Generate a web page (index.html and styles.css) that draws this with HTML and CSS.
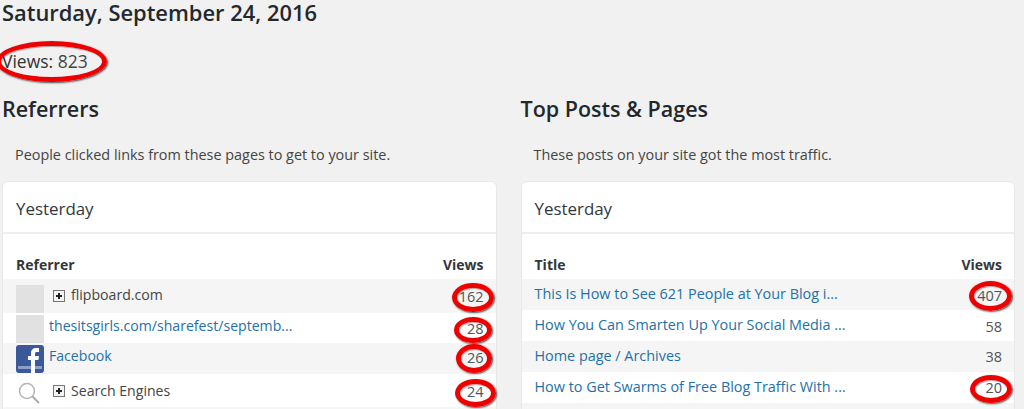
FILE: index.html
```html
<!DOCTYPE html>
<html lang="en">
<head>
    <meta charset="UTF-8">
    <title>Stats</title>
    <link rel="stylesheet" href="styles.css">
</head>
<body>
    <h1>Saturday, September 24, 2016</h1>
    <p class="total"><span class="circled"><b>Views:</b> 823<i class="ring ring-total"></i></span></p>

    <div class="columns">
        <!-- Referrers -->
        <div class="column">
            <h2>Referrers</h2>
            <p class="intro">People clicked links from these pages to get to your site.</p>
            <div class="card">
                <div class="card-title">Yesterday</div>
                <div class="table-head"><span>Referrer</span><span>Views</span></div>
                <div class="row row-a">
                    <span class="thumb"></span>
                    <span class="plus"></span>
                    <span class="name">flipboard.com</span>
                    <span class="num circled">162<i class="ring ring-162"></i></span>
                </div>
                <div class="row row-b">
                    <span class="thumb"></span>
                    <a class="link">thesitsgirls.com/sharefest/septemb...</a>
                    <span class="num circled">28<i class="ring ring-28"></i></span>
                </div>
                <div class="row row-c">
                    <svg class="thumb-icon" viewBox="0 0 28 28">
                        <rect width="28" height="28" rx="3" fill="#3b5998"/>
                        <rect x="2" y="21" width="24" height="3" fill="#8ba0c8"/>
                        <path d="M15 28V15h-3v-4h3V8c0-3 2-5 5-5h3v4h-2c-1.500 0-2 .6-2 2v2h4l-.6 4H19v13z" fill="#fff"/>
                    </svg>
                    <a class="link">Facebook</a>
                    <span class="num circled">26<i class="ring ring-26"></i></span>
                </div>
                <div class="row row-d">
                    <svg class="thumb-icon" viewBox="0 0 28 28">
                        <circle cx="11" cy="15" r="7.500" fill="none" stroke="#b5b5b5" stroke-width="1.500"/>
                        <path d="M16.500 20.500l6.500 6.500" stroke="#aaa" stroke-width="2"/>
                    </svg>
                    <span class="plus"></span>
                    <span class="name">Search Engines</span>
                    <span class="num circled">24<i class="ring ring-24"></i></span>
                </div>
                <div class="row row-last"></div>
            </div>
        </div>

        <!-- Top posts -->
        <div class="column">
            <h2>Top Posts &amp; Pages</h2>
            <p class="intro">These posts on your site got the most traffic.</p>
            <div class="card">
                <div class="card-title">Yesterday</div>
                <div class="table-head"><span>Title</span><span>Views</span></div>
                <div class="row post-row">
                    <a class="link">This Is How to See 621 People at Your Blog i...</a>
                    <span class="num num-407 circled">407<i class="ring ring-407"></i></span>
                </div>
                <div class="row post-row">
                    <a class="link">How You Can Smarten Up Your Social Media ...</a>
                    <span class="num num-58">58</span>
                </div>
                <div class="row post-row">
                    <a class="link">Home page / Archives</a>
                    <span class="num num-38">38</span>
                </div>
                <div class="row post-row">
                    <a class="link">How to Get Swarms of Free Blog Traffic With ...</a>
                    <span class="num num-20 circled">20<i class="ring ring-20"></i></span>
                </div>
                <div class="row row-last"></div>
            </div>
        </div>
    </div>
</body>
</html>
```

FILE: styles.css
```css
* {
    margin: 0;
    padding: 0;
    box-sizing: border-box;
}

html, body {
    height: 409px;
    overflow: hidden;
}

body {
    font-family: "Open Sans", sans-serif;
    background: #f1f1f1;
    color: #444;
    padding: 0 9px 0 2px;
}

h1 {
    font-size: 21.900px;
    font-weight: 600;
    line-height: 26px;
    color: #23282d;
}

.total {
    margin-top: 23px;
    font-size: 17.500px;
    line-height: 24px;
}

.total b {
    font-weight: 400;
    color: #333;
}

.circled {
    position: relative;
    display: inline-block;
}

.ring {
    position: absolute;
    border: 5px solid #ee0000;
    border-radius: 50%;
    box-shadow: 1px 1px 2px rgba(0,0,0,0.7), inset 1px 1px 1px rgba(0,0,0,0.3);
}

.ring-total {
    left: -6px;
    top: -8px;
    width: 111px;
    height: 41px;
}

.ring-162 {
    left: -7px;
    top: -4px;
    width: 42px;
    height: 29px;
}

.ring-28 {
    left: -13px;
    top: -2px;
    width: 38px;
    height: 26px;
}

.ring-26 {
    left: -11px;
    top: -4px;
    width: 36px;
    height: 29px;
}

.ring-24 {
    left: -12px;
    top: -3px;
    width: 41px;
    height: 28px;
}

.ring-407 {
    left: -8px;
    top: -5px;
    width: 43px;
    height: 30px;
}

.ring-20 {
    left: -15px;
    top: -3px;
    width: 42px;
    height: 28px;
}

.columns {
    display: flex;
    gap: 24px;
    margin-top: 21px;
}

.column {
    flex: 1;
    min-width: 0;
}

h2 {
    font-size: 21.500px;
    font-weight: 600;
    line-height: 30px;
    color: #23282d;
}

.intro {
    margin-top: 21px;
    padding-left: 13px;
    font-size: 14.400px;
    line-height: 20px;
}

.card {
    margin-top: 16px;
    background: #fff;
    border: 1px solid #e8e8e8;
    border-radius: 6px 6px 0 0;
}

.card-title {
    height: 52px;
    padding: 0 13px;
    font-size: 16.900px;
    line-height: 54px;
    font-weight: 500;
    color: #32373c;
    border-bottom: 2px solid #eee;
}

.table-head {
    display: flex;
    justify-content: space-between;
    height: 45px;
    padding: 21px 12px 0 13px;
    font-size: 14px;
    line-height: 20px;
    font-weight: 700;
    color: #32373c;
}

.row {
    display: flex;
    align-items: flex-start;
    padding: 0 12px 0 13px;
    font-size: 14.100px;
    line-height: 20px;
}

.row-a {
    height: 34px;
    padding-top: 6px;
    background: #f5f5f5;
}

.row-a .num {
    margin-top: 2px;
}

.row-b {
    height: 30px;
    padding-top: 2px;
}

.row-b .link, .row-c .link {
    margin-top: 1px;
}

.row-b .num {
    margin-top: 4px;
}

.row-c {
    height: 31px;
    padding-top: 2px;
    background: #f5f5f5;
}

.row-c .num {
    margin-top: 3px;
}

.row-d {
    height: 33px;
    padding-top: 7px;
}

.row-d .thumb-icon {
    margin-top: -5px;
}

.row-d .plus {
    margin-top: 4px;
}

.row-d .num {
    margin-top: 1px;
}

.post-row {
    height: 31px;
    padding-top: 5px;
    font-size: 14.400px;
}

.post-row:nth-of-type(odd) {
    background: #f5f5f5;
}

.num-407, .num-58 {
    margin-top: 2px;
}

.num-38, .num-20 {
    margin-top: 1px;
}

.row-last {
    height: 20px;
    background: #f5f5f5;
}

.thumb, .thumb-icon {
    flex: none;
    width: 28px;
    height: 28px;
    margin-right: 5px;
}

.thumb {
    background: #e1e1e1;
}

.plus {
    position: relative;
    flex: none;
    width: 12px;
    height: 12px;
    margin: 5px 6px 0 4px;
    background: #f3f3f3;
    border: 1px solid #777;
}

.plus::before, .plus::after {
    content: "";
    position: absolute;
    background: #222;
}

.plus::before {
    left: 2px;
    top: 4px;
    width: 6px;
    height: 2px;
}

.plus::after {
    left: 4px;
    top: 2px;
    width: 2px;
    height: 6px;
}

.name {
    color: #444;
}

.link {
    color: #2271a8;
}

.num {
    margin-left: auto;
    font-size: 14.500px;
    color: #50555a;
}
```
